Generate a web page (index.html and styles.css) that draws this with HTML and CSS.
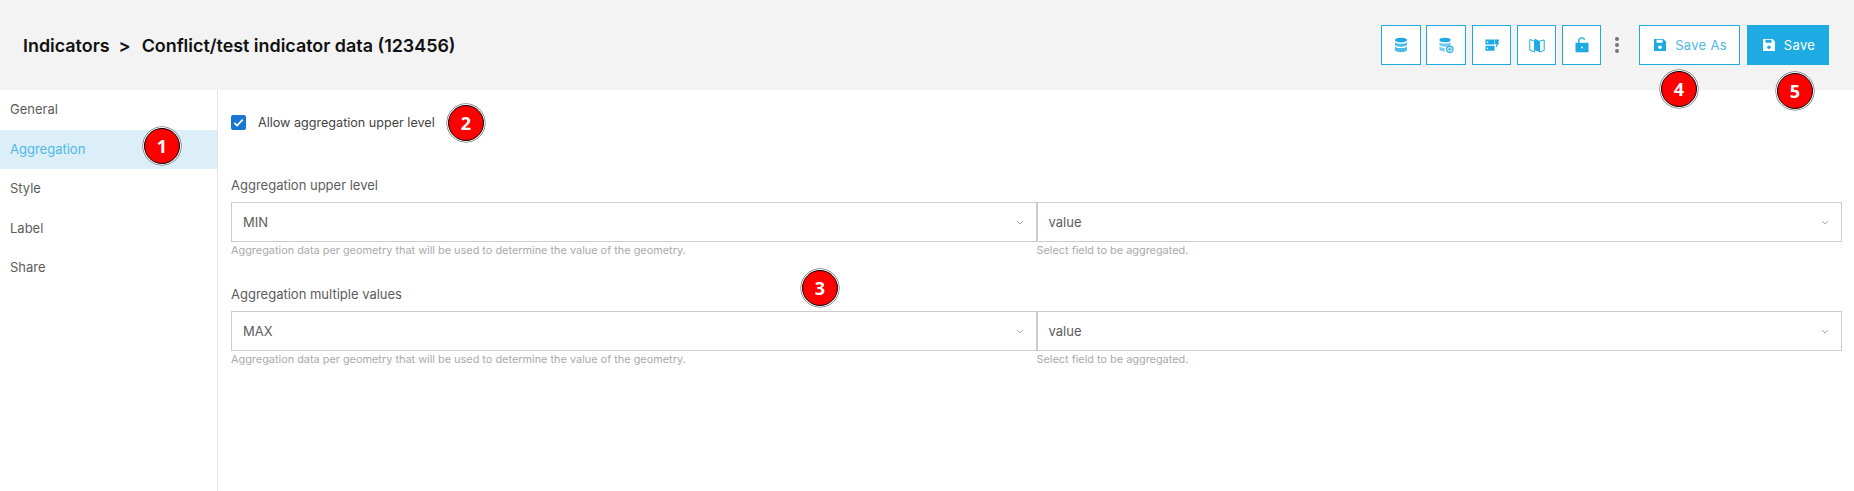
FILE: index.html
```html
<!DOCTYPE html>
<html lang="en">
<head>
    <meta charset="UTF-8">
    <meta name="viewport" content="width=device-width, initial-scale=1.0">
    <title>Indicator Aggregation</title>
    <link rel="stylesheet" href="styles.css">
</head>
<body>
    <header class="page-header">
        <h1 class="page-title">
            <span>Indicators</span>
            <span class="title-sep">&gt;</span>
            <span>Conflict/test indicator data (123456)</span>
        </h1>
        <div class="toolbar">
            <button class="icon-btn wide">
                <svg viewBox="0 0 16 16" class="icon"><path d="M8 .8c3.300 0 6 .9 6 2.300S11.300 5.400 8 5.400 2 4.500 2 3.100 4.700.8 8 .8z"/><path d="M2 5.200c1.200 1 3.500 1.500 6 1.500s4.800-.5 6-1.500v2.300c0 1.300-2.700 2.200-6 2.200s-6-.9-6-2.200z" fill-opacity=".8"/><path d="M2 9.600c1.200 1 3.500 1.500 6 1.500s4.800-.5 6-1.500v3.200c0 1.400-2.700 2.400-6 2.400s-6-1-6-2.400z" fill-opacity=".8"/></svg>
            </button>
            <button class="icon-btn wide">
                <svg viewBox="0 0 16 16" class="icon"><path d="M7 .8c3.200 0 5.600.9 5.600 2.200S10.200 5.300 7 5.300 1.400 4.300 1.400 3 3.800.8 7 .8z"/><path d="M1.400 5.200c1.100.9 3.200 1.400 5.600 1.400s4.500-.5 5.600-1.400v2.400c0 1.300-2.500 2.100-5.600 2.100s-5.600-.8-5.600-2.100z" fill-opacity=".6"/><path d="M1.400 9.500c1.100.9 3 1.300 5.200 1.400v3.600c-3-.1-5.200-1-5.200-2.300z" fill-opacity=".6"/><circle cx="11.800" cy="12.200" r="3.100" fill="none" stroke="#1eabe3" stroke-width="1.200"/><path d="M9.800 12.200h4M11.800 10.200v4" stroke="#1eabe3" stroke-width="1"/></svg>
            </button>
            <button class="icon-btn">
                <svg viewBox="0 0 16 16" class="icon"><path d="M1.500 2.500h9v5h-9zM1.500 8.800h9v5h-9z"/><path d="M11 2.500h4.500l-1.500 3h1.500L11.800 11l.7-4H11z"/><circle cx="3.500" cy="5" r=".8" fill="#fff"/><circle cx="3.500" cy="11.300" r=".8" fill="#fff"/></svg>
            </button>
            <button class="icon-btn">
                <svg viewBox="0 0 16 16" class="icon"><path d="M.8 2.500l4.700 1.500v10.800l-4.700-1.500z" fill="none" stroke="#1eabe3" stroke-width="1"/><path d="M5.500 1.500l5 2.500v11l-5-2z"/><path d="M10.500 4l4.700-1v10.500l-4.700 1.500z" fill="none" stroke="#1eabe3" stroke-width="1"/></svg>
            </button>
            <button class="icon-btn">
                <svg viewBox="0 0 16 16" class="icon"><path d="M1.500 5.800h13v9.500h-13z"/><path d="M4.800 6V3.800a3 3 0 0 1 5.800-1" fill="none" stroke="#1eabe3" stroke-width="1.400"/><circle cx="8" cy="10.500" r=".9" fill="#fff"/></svg>
            </button>
            <div class="more-dots"><i></i><i></i><i></i></div>
            <button class="text-btn save-as">
                <svg viewBox="0 0 16 16" class="save-icon"><path d="M2 2h9.500L14 4.500V14H2z"/><path d="M4.500 2.800h6v3h-6z" fill="#fff"/><circle cx="8" cy="10.300" r="1.800" fill="#fff"/></svg>
                Save As
            </button>
            <button class="text-btn save">
                <svg viewBox="0 0 16 16" class="save-icon"><path d="M2 2h9.500L14 4.500V14H2z"/><path d="M4.500 2.800h6v3h-6z" fill="#1eabe3"/><circle cx="8" cy="10.300" r="1.800" fill="#1eabe3"/></svg>
                Save
            </button>
        </div>
    </header>

    <div class="page-body">
        <nav class="side-nav">
            <a class="nav-item">General</a>
            <a class="nav-item active">Aggregation</a>
            <a class="nav-item">Style</a>
            <a class="nav-item">Label</a>
            <a class="nav-item">Share</a>
        </nav>

        <main class="form-area">
            <label class="check-row">
                <span class="checkbox">
                    <svg viewBox="0 0 16 16"><path d="M3.500 8.300l3 3 6-6.300" fill="none" stroke="#fff" stroke-width="1.800"/></svg>
                </span>
                Allow aggregation upper level
            </label>

            <section class="field-group first">
                <div class="field-label">Aggregation upper level</div>
                <div class="select-row">
                    <div class="select"><span>MIN</span><svg class="chevron" viewBox="0 0 8 5"><path d="M1 1l3 3 3-3" fill="none" stroke="#aaa" stroke-width="1"/></svg></div>
                    <div class="select"><span>value</span><svg class="chevron" viewBox="0 0 8 5"><path d="M1 1l3 3 3-3" fill="none" stroke="#aaa" stroke-width="1"/></svg></div>
                </div>
                <div class="help-row">
                    <div>Aggregation data per geometry that will be used to determine the value of the geometry.</div>
                    <div>Select field to be aggregated.</div>
                </div>
            </section>

            <section class="field-group">
                <div class="field-label">Aggregation multiple values</div>
                <div class="select-row">
                    <div class="select"><span>MAX</span><svg class="chevron" viewBox="0 0 8 5"><path d="M1 1l3 3 3-3" fill="none" stroke="#aaa" stroke-width="1"/></svg></div>
                    <div class="select"><span>value</span><svg class="chevron" viewBox="0 0 8 5"><path d="M1 1l3 3 3-3" fill="none" stroke="#aaa" stroke-width="1"/></svg></div>
                </div>
                <div class="help-row">
                    <div>Aggregation data per geometry that will be used to determine the value of the geometry.</div>
                    <div>Select field to be aggregated.</div>
                </div>
            </section>
        </main>
    </div>

    <div class="marker m1">1</div>
    <div class="marker m2">2</div>
    <div class="marker m3">3</div>
    <div class="marker m4">4</div>
    <div class="marker m5">5</div>
</body>
</html>
```

FILE: styles.css
```css
html, body {
    height: 100%;
}
body {
    font-family: Inter, Arial, sans-serif;
    margin: 0;
    background-color: #fff;
    color: #5c5c5c;
    overflow: hidden;
    display: flex;
    flex-direction: column;
}
button {
    font-family: inherit;
    cursor: pointer;
    margin: 0;
    padding: 0;
}

/* header */
.page-header {
    height: 90px;
    flex: none;
    background-color: #f3f3f3;
    display: flex;
    align-items: center;
    justify-content: space-between;
    padding: 0 25px 0 23px;
    box-sizing: border-box;
}
.page-title {
    margin: 0;
    font-size: 17.900px;
    font-weight: 600;
    color: #111;
    display: flex;
}
.title-sep {
    margin: 0 11px 0 9px;
}
.toolbar {
    display: flex;
    align-items: center;
}
.icon-btn {
    width: 39px;
    height: 40px;
    margin-right: 6px;
    background-color: #fff;
    border: 1px solid #1eabe3;
    display: flex;
    align-items: center;
    justify-content: center;
}
.icon-btn.wide {
    width: 40px;
    margin-right: 5px;
}
.icon-btn:nth-child(2) {
    margin-right: 6px;
}
.icon-btn:nth-child(5) {
    margin-right: 0;
}
.icon {
    width: 16px;
    height: 16px;
    fill: #1eabe3;
}
.more-dots {
    width: 32px;
    margin-right: 6px;
    display: flex;
    flex-direction: column;
    align-items: center;
    gap: 2px;
}
.more-dots i {
    width: 4px;
    height: 4px;
    border-radius: 50%;
    background-color: #777;
}
.text-btn {
    height: 40px;
    display: flex;
    align-items: center;
    justify-content: center;
    gap: 7px;
    font-size: 13px;
    letter-spacing: .3px;
    box-sizing: border-box;
}
.save-icon {
    width: 16px;
    height: 16px;
    fill: currentColor;
}
.save-as {
    width: 101px;
    margin-right: 7px;
    background-color: #fff;
    color: #4db8e8;
    border: 1px solid #1eabe3;
}
.save-as .save-icon {
    color: #1eabe3;
}
.save {
    width: 82px;
    background-color: #1eabe3;
    color: #fff;
    border: none;
}

/* body */
.page-body {
    flex: 1;
    display: flex;
}
.side-nav {
    width: 218px;
    flex: none;
    box-sizing: border-box;
    border-right: 1px solid #e5e5e5;
}
.nav-item {
    display: block;
    height: 39.6px;
    line-height: 39.6px;
    padding-left: 10px;
    font-size: 13px;
    color: #5c5c5c;
}
.nav-item.active {
    background-color: #dceef8;
    color: #4db8e8;
}
.form-area {
    flex: 1;
    padding: 24px 12px 0 13px;
    min-width: 0;
}
.check-row {
    display: flex;
    align-items: center;
    gap: 12px;
    height: 16px;
    font-size: 12.600px;
    color: #444;
}
.checkbox {
    width: 15px;
    height: 15px;
    background-color: #1976d2;
    border-radius: 2px;
    display: block;
}
.checkbox svg {
    display: block;
    width: 15px;
    height: 15px;
}
.field-group {
    margin-top: 29px;
}
.field-group.first {
    margin-top: 47px;
}
.field-label {
    font-size: 13px;
    line-height: 16px;
    margin-bottom: 9px;
    color: #5c5c5c;
}
.select-row, .help-row {
    display: grid;
    grid-template-columns: 1fr 1fr;
}
.select {
    height: 40px;
    box-sizing: border-box;
    border: 1px solid #ccc;
    display: flex;
    align-items: center;
    justify-content: space-between;
    padding: 0 12px 0 11px;
    font-size: 13px;
    color: #5c5c5c;
}
.chevron {
    width: 8px;
    height: 5px;
}
.help-row {
    margin-top: 1px;
    font-size: 10.900px;
    line-height: 14px;
    color: #aaa;
}

/* numbered callouts lying over the screenshot */
.marker {
    position: absolute;
    width: 36px;
    height: 36px;
    margin: -18px 0 0 -18px;
    border-radius: 50%;
    background-color: #f00;
    border: 1px solid #000;
    box-shadow: 0 0 0 1px #fff, 0 0 0 1.500px #444;
    box-sizing: border-box;
    color: #fff;
    font-family: "Open Sans", sans-serif;
    font-weight: 700;
    font-size: 18px;
    line-height: 34px;
    text-align: center;
}
.m1 { left: 162px; top: 146px; }
.m2 { left: 466px; top: 123px; }
.m3 { left: 820px; top: 288px; }
.m4 { left: 1679px; top: 89px; }
.m5 { left: 1795px; top: 91px; }
```
